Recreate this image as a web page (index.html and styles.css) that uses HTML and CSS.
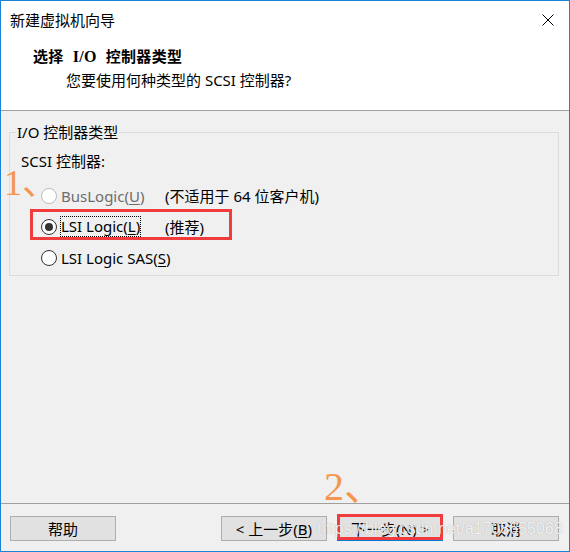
FILE: index.html
```html
<!DOCTYPE html>
<html lang="zh-CN">
<head>
<meta charset="utf-8">
<title>新建虚拟机向导</title>
<link rel="stylesheet" href="styles.css">
</head>
<body>
<div class="window">
  <div class="titlebar">
    <span class="title">新建虚拟机向导</span>
    <span class="close" aria-label="关闭">
      <svg width="12" height="12" viewBox="0 0 12 12"><path d="M0.5 0.5 L11.5 11.5 M11.5 0.5 L0.5 11.5" stroke="#000" stroke-width="1" fill="none"/></svg>
    </span>
  </div>
  <div class="header">
    <div class="h-title">选择 <span class="latin">I/O</span> 控制器类型</div>
    <div class="h-sub">您要使用何种类型的 SCSI 控制器?</div>
  </div>
  <div class="content">
    <fieldset class="group">
      <legend>I/O 控制器类型</legend>
      <div class="group-label">SCSI 控制器:</div>
      <div class="options">
        <div class="option disabled">
          <span class="radio"></span>
          <span class="opt-label">BusLogic(<u>U</u>)</span>
          <span class="opt-note">(不适用于 64 位客户机)</span>
        </div>
        <div class="option">
          <span class="radio checked"></span>
          <span class="opt-label"><span class="focus">LSI Logic(<u>L</u>)</span></span>
          <span class="opt-note">(推荐)</span>
          <span class="redbox redbox-option"></span>
        </div>
        <div class="option">
          <span class="radio"></span>
          <span class="opt-label">LSI Logic SAS(<u>S</u>)</span>
        </div>
      </div>
    </fieldset>
    <span class="anno anno-1">1、</span>
  </div>
  <div class="footer">
    <button class="btn">帮助</button>
    <div class="btn-group">
      <button class="btn">&lt; 上一步(<u>B</u>)</button>
      <div class="next-wrap">
        <button class="btn btn-default">下一步(<u>N</u>) &gt;</button>
        <span class="redbox redbox-next"></span>
      </div>
      <button class="btn">取消</button>
    </div>
    <span class="anno anno-2">2、</span>
    <span class="watermark">https://blog.csdn.net/a1708655068</span>
  </div>
</div>
</body>
</html>
```
FILE: styles.css
```css
* { box-sizing: border-box; }

html, body {
  margin: 0;
  padding: 0;
  background: #f0f0f0;
}

body {
  font-family: "Noto Sans", "Noto Sans CJK SC", sans-serif;
  font-size: 15px;
  color: #000;
}

.window {
  width: 570px;
  height: 552px;
  border: 1px solid #1883d7;
  background: #f0f0f0;
  display: flex;
  flex-direction: column;
  position: relative;
}

.titlebar {
  height: 38px;
  background: #fff;
  display: flex;
  align-items: center;
  justify-content: space-between;
  padding-left: 9px;
  padding-right: 15px;
}

.title {
  line-height: 20px;
}

.close {
  display: flex;
  width: 12px;
  height: 12px;
}

.header {
  background: #fff;
  padding: 8px 0 20px 0;
  border-bottom: 1px solid #a0a0a0;
}

.h-title {
  font-family: "Liberation Serif", "Noto Sans CJK SC", serif;
  font-weight: bold;
  line-height: 20px;
  padding-left: 32px;
  word-spacing: 5px;
  letter-spacing: 0.3px;
}

.h-title .latin {
  font-size: 16px;
}

.h-sub {
  margin-top: 3px;
  line-height: 20px;
  padding-left: 65px;
}

.content {
  flex: 1;
  position: relative;
}

.group {
  margin: 12px 10px 0 8px;
  padding: 0 6px 2px 6px;
  border: 1px solid #dcdcdc;
  min-width: 0;
}

.group legend {
  padding: 0 1px;
  line-height: 18px;
}

.group-label {
  margin: 10px 0 9px 5px;
  line-height: 20px;
}

.options {
  display: flex;
  flex-direction: column;
  padding-left: 25px;
}

.option {
  position: relative;
  height: 31px;
  display: grid;
  grid-template-columns: 16px 100px auto;
  column-gap: 4px;
  align-items: center;
}

.radio {
  width: 16px;
  height: 16px;
  border-radius: 50%;
  border: 1px solid #333;
  background: #fff;
  display: flex;
  align-items: center;
  justify-content: center;
}

.radio.checked::after {
  content: "";
  width: 8px;
  height: 8px;
  border-radius: 50%;
  background: #333;
}

.option.disabled .radio {
  border-color: #bcbcbc;
}

.option.disabled .opt-label {
  color: #6d6d6d;
}

.opt-label {
  line-height: 20px;
  white-space: nowrap;
}

.opt-note {
  line-height: 20px;
  white-space: nowrap;
}

.focus {
  display: inline-block;
  border: 1px dotted #000;
  margin-left: -1px;
  line-height: 19px;
}

u {
  text-decoration: underline;
  text-underline-offset: 2px;
}

.redbox {
  position: absolute;
  border: 3px solid #f03c3c;
  pointer-events: none;
}

.redbox-option {
  left: -11px;
  top: -2px;
  width: 202px;
  height: 31px;
}

.anno {
  position: absolute;
  font-family: "Liberation Serif", "Noto Sans CJK SC", serif;
  color: #f4964f;
  line-height: 1;
  white-space: nowrap;
}

.anno-1 {
  left: 3px;
  top: 54px;
  font-size: 36px;
}

.anno-2 {
  left: 323px;
  top: -37px;
  font-size: 40px;
}

.footer {
  position: relative;
  border-top: 1px solid #a0a0a0;
  padding: 12px 10px 10px 9px;
  display: flex;
  justify-content: space-between;
}

.btn-group {
  display: flex;
  gap: 10px;
}

.btn {
  width: 106px;
  height: 25px;
  border: 1px solid #adadad;
  background: #e1e1e1;
  font-family: "Noto Sans", "Noto Sans CJK SC", sans-serif;
  font-size: 15px;
  color: #000;
  padding: 0;
  line-height: 20px;
}

.btn-default {
  border-color: #0078d7;
}

.next-wrap {
  position: relative;
  display: flex;
}

.redbox-next {
  left: 0;
  top: -2px;
  width: 106px;
  height: 26px;
}

.watermark {
  position: absolute;
  left: 316px;
  top: 12px;
  font-family: "Liberation Sans", sans-serif;
  font-size: 16px;
  line-height: 25px;
  color: rgba(255, 255, 255, 0.85);
  text-shadow: 0 0 1px rgba(120, 120, 120, 0.6);
  pointer-events: none;
  white-space: nowrap;
}
```
